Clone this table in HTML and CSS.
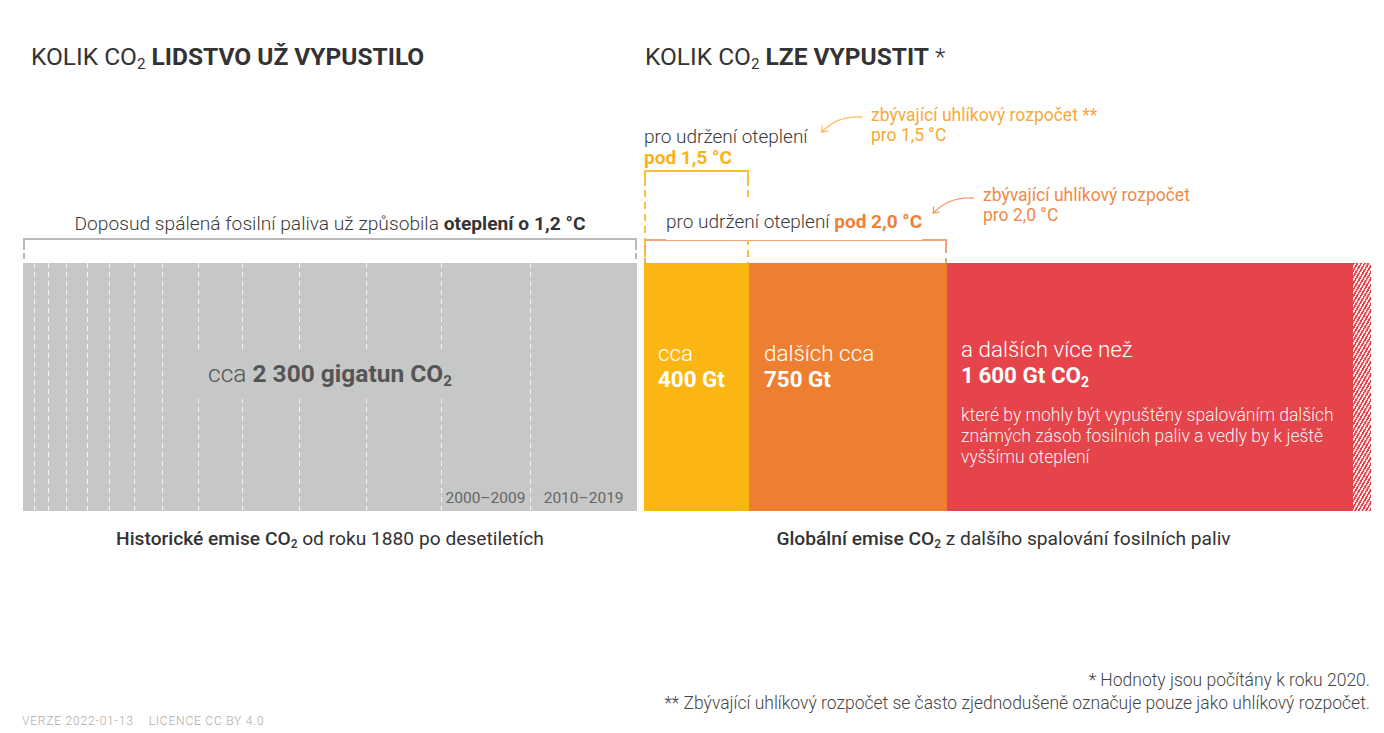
FILE: index.html
```html
<!DOCTYPE html>
<html lang="cs">
<head>
<meta charset="utf-8">
<title>Kolik CO2</title>
<link rel="stylesheet" href="styles.css">
</head>
<body>
<div class="page">
  <div class="chart">
    <h2 class="title t-left">KOLIK CO<sub>2</sub> <b>LIDSTVO UŽ VYPUSTILO</b></h2>
    <h2 class="title t-right">KOLIK CO<sub>2</sub> <b>LZE VYPUSTIT</b> <span class="ast">*</span></h2>

    <div class="annot-left">
      <p class="brk-label">Doposud spálená fosilní paliva už způsobila <b>oteplení o 1,2 °C</b></p>
      <div class="bracket bracket-grey"></div>
    </div>

    <div class="annot-right">
      <div class="note-row row1">
        <p class="lbl lbl1">pro udržení oteplení<br><b class="c-yellow">pod 1,5 °C</b></p>
        <svg class="arrow arrow1" width="48" height="30" viewBox="0 0 48 30">
          <path d="M43.7 5 C28 4 14 9 4 20" />
          <path d="M4.2 14 L4 20 L10 19.2" />
        </svg>
        <p class="note note1">zbývající uhlíkový rozpočet **<br>pro 1,5 °C</p>
      </div>
      <div class="note-row row2">
        <p class="lbl lbl2"><span>pro udržení oteplení <b class="c-orange">pod 2,0 °C</b></span></p>
        <svg class="arrow arrow2" width="52" height="30" viewBox="0 0 52 30">
          <path d="M45.3 5 C30 4 16 9 5.3 20" />
          <path d="M5.5 14 L5.3 20 L11.3 19.2" />
        </svg>
        <p class="note note2">zbývající uhlíkový rozpočet<br>pro 2,0 °C</p>
      </div>
      <div class="bracket bracket-orange"></div>
    </div>

    <div class="bar-grey">
      <div class="decades">
        <div class="decade" style="width:11.3px"></div>
        <div class="decade" style="width:14px"></div>
        <div class="decade" style="width:17.4px"></div>
        <div class="decade" style="width:21px"></div>
        <div class="decade" style="width:22.3px"></div>
        <div class="decade" style="width:25.3px"></div>
        <div class="decade" style="width:28px"></div>
        <div class="decade" style="width:35.4px"></div>
        <div class="decade" style="width:44px"></div>
        <div class="decade" style="width:57.6px"></div>
        <div class="decade" style="width:66.4px"></div>
        <div class="decade" style="width:75px"></div>
        <div class="decade" style="width:89.6px"><span>2000–2009</span></div>
        <div class="decade last"><span>2010–2019</span></div>
      </div>
      <div class="grey-label">cca <b>2 300 gigatun CO<sub>2</sub></b></div>
    </div>

    <div class="bars-right">
      <div class="seg seg-yellow"><p>cca<br><b>400 Gt</b></p></div>
      <div class="seg seg-orange"><p>dalších cca<br><b>750 Gt</b></p></div>
      <div class="seg seg-red">
        <p>a dalších více než<br><b>1&#8201;600 Gt CO<sub>2</sub></b></p>
        <p class="more">které by mohly být vypuštěny spalováním dalších<br>známých zásob fosilních paliv a vedly by k ještě<br>vyššímu oteplení</p>
      </div>
      <div class="seg seg-hatch"></div>
    </div>

    <p class="caption"><b>Historické emise CO<sub>2</sub></b> od roku 1880 po desetiletích</p>
    <p class="caption cap-right"><b>Globální emise CO<sub>2</sub></b> z dalšího spalování fosilních paliv</p>
  </div>

  <div class="footnotes">
    <p>* Hodnoty jsou počítány k roku 2020.</p>
    <p>** Zbývající uhlíkový rozpočet se často zjednodušeně označuje pouze jako uhlíkový rozpočet.</p>
  </div>
  <div class="version"><span>VERZE 2022-01-13</span><span>LICENCE CC BY 4.0</span></div>
</div>
</body>
</html>
```

FILE: styles.css
```css
* { box-sizing: border-box; }

body {
  margin: 0;
  background: #fff;
  font-family: Roboto, "Noto Sans", "Liberation Sans", sans-serif;
  color: #333;
}

.page {
  width: 1384px;
  height: 733px;
  overflow: hidden;
}

.chart {
  display: grid;
  grid-template-columns: 614px 727px;
  grid-template-rows: 28px 192px 248px auto;
  column-gap: 7px;
  margin-left: 23px;
  padding-top: 43px;
}

sub {
  font-size: 0.62em;
  vertical-align: -0.28em;
  line-height: 0;
}

.title {
  margin: 0;
  font-size: 24.5px;
  line-height: 28px;
  font-weight: 400;
  color: #333;
  white-space: nowrap;
}
.title b { font-weight: 700; }
.t-left { padding-left: 8px; }
.t-right { padding-left: 1px; }
.ast { font-weight: 300; }

/* brackets */
.bracket,
.seg-yellow::before {
  --c: #b9b9b9;
  --solid: 10px;
  --start: 13px;
  --dash: 6px;
  --period: 10px;
  border-top: 2px solid var(--c);
  background:
    linear-gradient(var(--c), var(--c)) left top / 2px var(--solid) no-repeat,
    linear-gradient(var(--c), var(--c)) right top / 2px var(--solid) no-repeat,
    repeating-linear-gradient(to bottom, var(--c) 0 var(--dash), transparent var(--dash) var(--period)) left var(--start) / 2px calc(100% - var(--start)) no-repeat,
    repeating-linear-gradient(to bottom, var(--c) 0 var(--dash), transparent var(--dash) var(--period)) right var(--start) / 2px calc(100% - var(--start)) no-repeat;
}

.annot-left {
  display: flex;
  flex-direction: column;
  justify-content: flex-end;
}
.brk-label {
  margin: 0 0 4px;
  text-align: center;
  font-size: 19.2px;
  line-height: 21px;
  font-weight: 300;
  color: #3a3a3a;
  white-space: nowrap;
}
.brk-label b { font-weight: 700; color: #333; }
.bracket-grey { height: 25px; }

.annot-right {
  display: flex;
  flex-direction: column;
}
.note-row {
  display: flex;
  align-items: flex-start;
}
.row1 { margin-top: 35px; height: 62px; }
.row2 { margin-top: 18px; height: 46px; }

.lbl {
  margin: 0;
  flex: none;
  font-size: 19px;
  line-height: 21px;
  font-weight: 300;
  color: #3a3a3a;
  white-space: nowrap;
}
.lbl b { font-weight: 700; }
.lbl1 { width: 174px; margin-top: 20px; }
.lbl2 { width: 284px; margin-top: 25px; padding-left: 22px; }
.lbl2 span {
  position: relative;
  z-index: 1;
  background: #fff;
  padding: 8px 0 7px;
}
.c-yellow { color: #fbb217; }
.c-orange { color: #ef8035; }

.arrow { flex: none; fill: none; stroke-width: 1.3; stroke-linecap: round; stroke-linejoin: round; }
.arrow1 { margin-top: 6px; stroke: #f8bd62; }
.arrow2 { margin-top: 7px; stroke: #f29d72; }

.note {
  margin: 0;
  flex: none;
  font-size: 17.5px;
  line-height: 19.5px;
  font-weight: 400;
  white-space: nowrap;
}
.note1 { margin-left: 5px; color: #f7a93a; }
.note2 { margin-left: 3px; color: #f08a4a; }

.bracket-orange {
  --c: #f3a27a;
  --solid: 12px;
  --start: 17px;
  margin-top: auto;
  width: 303px;
  height: 24px;
}

/* grey bar */
.bar-grey {
  display: grid;
  background: #c6c7c7;
}
.bar-grey > * { grid-area: 1 / 1; }
.decades { display: flex; }
.decade {
  flex: none;
  display: flex;
  align-items: flex-end;
  justify-content: center;
  background: repeating-linear-gradient(to bottom, rgba(255,255,255,0.8) 0 5px, transparent 5px 9px) left top / 1px 100% no-repeat;
}
.decade:first-child { background: none; }
.decade.last { flex: 1; }
.decade span {
  font-size: 15.5px;
  line-height: 18px;
  padding-bottom: 4px;
  color: #666;
  white-space: nowrap;
}
.grey-label {
  align-self: start;
  justify-self: center;
  margin-top: 86px;
  height: 50px;
  line-height: 50px;
  padding: 0 12px;
  background: #c6c7c7;
  font-size: 24.5px;
  font-weight: 300;
  color: #555;
  white-space: nowrap;
}
.grey-label b { font-weight: 700; }

/* right bars */
.bars-right { display: flex; }
.seg {
  flex: none;
  position: relative;
  color: #fff;
  font-size: 22.4px;
  line-height: 26px;
  font-weight: 300;
  white-space: nowrap;
}
.seg p { margin: 0; }
.seg b { font-weight: 700; }
.seg-yellow { width: 105px; background: #fcb614; padding: 77px 0 0 14px; }
.seg-orange { width: 198px; background: #ee7f31; padding: 77px 0 0 15px; }
.seg-red { width: 406px; background: #e5444b; padding: 73px 0 0 14px; }
.seg-red .more {
  margin-top: 17px;
  font-size: 17.5px;
  line-height: 21px;
  color: rgba(255,255,255,0.95);
}
.seg-hatch {
  width: 18px;
  background: repeating-linear-gradient(120deg, #e5444b 0 1.6px, #fde6e6 1.6px 3.2px);
}
.seg-yellow::before {
  content: "";
  position: absolute;
  left: 0;
  right: 0;
  bottom: 100%;
  height: 91px;
  z-index: 0;
  --c: #fbbd3c;
  --solid: 14px;
  --start: 18px;
  --dash: 7px;
  --period: 12px;
}

.caption {
  margin: 17px 0 0;
  text-align: center;
  font-size: 19.2px;
  line-height: 22px;
  font-weight: 400;
  color: #333;
  white-space: nowrap;
}
.caption b { font-weight: 500; }
.cap-right { padding-right: 8px; }

.footnotes {
  margin: 119px 14px 0 0;
  text-align: right;
  font-size: 17.5px;
  line-height: 23px;
  font-weight: 300;
  color: #444;
}
.footnotes p { margin: 0; }

.version {
  display: flex;
  gap: 15px;
  margin-left: 22px;
  font-size: 12px;
  line-height: 13px;
  letter-spacing: 0.8px;
  font-weight: 300;
  color: #aaa;
}
```
